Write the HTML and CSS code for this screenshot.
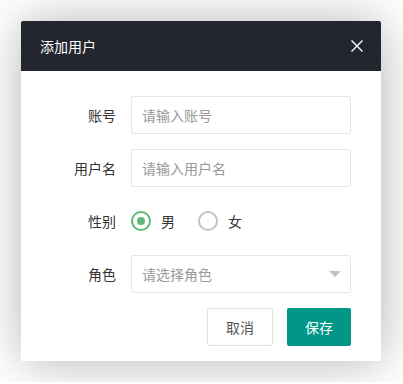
FILE: index.html
```html
<!DOCTYPE html>
<html lang="zh-CN">
<head>
    <meta charset="UTF-8">
    <meta name="viewport" content="width=device-width, initial-scale=1.0">
    <title>添加用户</title>
    <link rel="stylesheet" href="styles.css">
</head>
<body>
    <div class="layer">
        <div class="layer-title">
            <span>添加用户</span>
            <svg class="layer-close" width="12" height="12" viewBox="0 0 12 12">
                <path d="M0.5 0.5 L11.5 11.5 M11.5 0.5 L0.5 11.5" stroke="#fff" stroke-width="1.4" fill="none"/>
            </svg>
        </div>

        <form class="layer-body">
            <div class="form-item">
                <label class="form-label">账号</label>
                <input class="form-input" type="text" placeholder="请输入账号">
            </div>
            <div class="form-item">
                <label class="form-label">用户名</label>
                <input class="form-input" type="text" placeholder="请输入用户名">
            </div>
            <div class="form-item">
                <label class="form-label">性别</label>
                <div class="radio-group">
                    <div class="radio checked"><i class="radio-icon"></i><span>男</span></div>
                    <div class="radio"><i class="radio-icon"></i><span>女</span></div>
                </div>
            </div>
            <div class="form-item">
                <label class="form-label">角色</label>
                <div class="form-select">
                    <span>请选择角色</span>
                    <i class="select-arrow"></i>
                </div>
            </div>
            <div class="form-actions">
                <button type="button" class="btn btn-default">取消</button>
                <button type="button" class="btn btn-primary">保存</button>
            </div>
        </form>
    </div>
</body>
</html>
```

FILE: styles.css
```css
:root {
    --header-color: #23262e;
    --primary-color: #009688;
    --radio-color: #5fb878;
    --border-color: #e6e6e6;
    --text-color: #333;
    --placeholder-color: #999;
}

* {
    margin: 0;
    padding: 0;
    box-sizing: border-box;
    font-family: "Noto Sans CJK SC", "Noto Sans", sans-serif;
}

body {
    background-color: #fff;
    padding: 21px;
}

.layer {
    width: 360px;
    background-color: #fff;
    box-shadow: 1px 1px 50px rgba(0, 0, 0, 0.3);
    border-radius: 2px;
    overflow: hidden;
}

.layer-title {
    height: 50px;
    background-color: var(--header-color);
    color: #fff;
    font-size: 14px;
    display: flex;
    align-items: center;
    justify-content: space-between;
    padding: 0 18px 0 19px;
}

.layer-body {
    padding: 25px 30px 15px 0;
}

.form-item {
    display: flex;
    height: 38px;
    margin-bottom: 15px;
}

.form-label {
    width: 110px;
    padding: 0 15px;
    text-align: right;
    line-height: 38px;
    font-size: 14px;
    color: var(--text-color);
    flex-shrink: 0;
}

.form-input {
    flex: 1;
    height: 38px;
    border: 1px solid var(--border-color);
    border-radius: 2px;
    padding-left: 10px;
    font-size: 14px;
    color: var(--text-color);
    outline: none;
}

.form-input::placeholder {
    color: var(--placeholder-color);
}

.radio-group {
    display: flex;
    align-items: center;
}

.radio {
    display: flex;
    align-items: center;
    font-size: 14px;
    color: var(--text-color);
    margin-right: 23px;
}

.radio-icon {
    width: 20px;
    height: 20px;
    border: 2px solid #c2c2c2;
    border-radius: 50%;
    margin-right: 10px;
    display: flex;
    align-items: center;
    justify-content: center;
}

.radio.checked .radio-icon {
    border-color: var(--radio-color);
}

.radio.checked .radio-icon::after {
    content: "";
    width: 8px;
    height: 8px;
    border-radius: 50%;
    background-color: var(--radio-color);
}

.form-select {
    flex: 1;
    position: relative;
    height: 38px;
    border: 1px solid var(--border-color);
    border-radius: 2px;
    padding-left: 10px;
    line-height: 36px;
    font-size: 14px;
    color: var(--placeholder-color);
}

.select-arrow {
    position: absolute;
    right: 9px;
    top: 15px;
    border-top: 6px solid #c2c2c2;
    border-left: 6px solid transparent;
    border-right: 6px solid transparent;
}

.form-actions {
    display: flex;
    justify-content: flex-end;
    gap: 14px;
}

.btn {
    height: 38px;
    padding: 0 18px;
    font-size: 14px;
    border-radius: 2px;
    cursor: pointer;
}

.btn-default {
    background-color: #fff;
    border: 1px solid #e0e0e0;
    color: #555;
}

.btn-primary {
    background-color: var(--primary-color);
    border: none;
    color: #fff;
}
```
